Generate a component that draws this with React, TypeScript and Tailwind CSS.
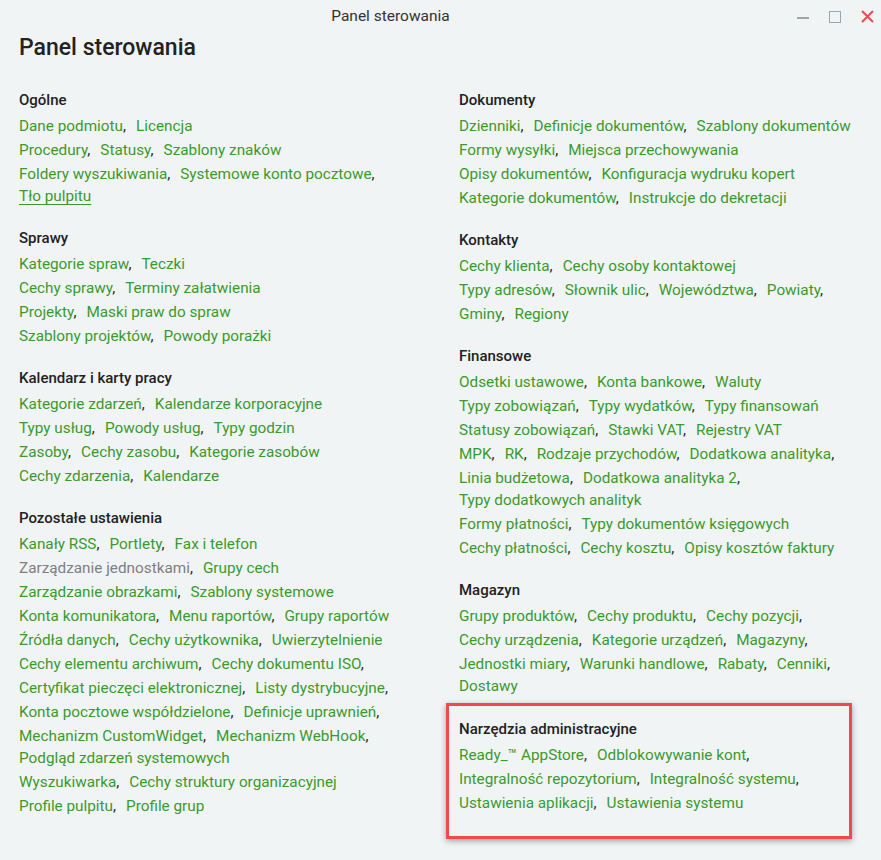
// A line is "Item|Item|Item" ; a trailing "," adds a comma after the last item.
// Lines starting with "~" continue the previous row (wrapped, no row gap).
interface Section {
  title: string;
  lines: string[];
  highlight?: boolean;
}

const MUTED = ["Zarządzanie jednostkami"];
const UNDERLINED = ["Tło pulpitu"];

const left: Section[] = [
  {
    title: "Ogólne",
    lines: [
      "Dane podmiotu|Licencja",
      "Procedury|Statusy|Szablony znaków",
      "Foldery wyszukiwania|Systemowe konto pocztowe,",
      "~Tło pulpitu",
    ],
  },
  {
    title: "Sprawy",
    lines: [
      "Kategorie spraw|Teczki",
      "Cechy sprawy|Terminy załatwienia",
      "Projekty|Maski praw do spraw",
      "Szablony projektów|Powody porażki",
    ],
  },
  {
    title: "Kalendarz i karty pracy",
    lines: [
      "Kategorie zdarzeń|Kalendarze korporacyjne",
      "Typy usług|Powody usług|Typy godzin",
      "Zasoby|Cechy zasobu|Kategorie zasobów",
      "Cechy zdarzenia|Kalendarze",
    ],
  },
  {
    title: "Pozostałe ustawienia",
    lines: [
      "Kanały RSS|Portlety|Fax i telefon",
      "Zarządzanie jednostkami|Grupy cech",
      "Zarządzanie obrazkami|Szablony systemowe",
      "Konta komunikatora|Menu raportów|Grupy raportów",
      "Źródła danych|Cechy użytkownika|Uwierzytelnienie",
      "Cechy elementu archiwum|Cechy dokumentu ISO,",
      "Certyfikat pieczęci elektronicznej|Listy dystrybucyjne,",
      "Konta pocztowe współdzielone|Definicje uprawnień,",
      "Mechanizm CustomWidget|Mechanizm WebHook,",
      "~Podgląd zdarzeń systemowych",
      "Wyszukiwarka|Cechy struktury organizacyjnej",
      "Profile pulpitu|Profile grup",
    ],
  },
];

const right: Section[] = [
  {
    title: "Dokumenty",
    lines: [
      "Dzienniki|Definicje dokumentów|Szablony dokumentów",
      "Formy wysyłki|Miejsca przechowywania",
      "Opisy dokumentów|Konfiguracja wydruku kopert",
      "Kategorie dokumentów|Instrukcje do dekretacji",
    ],
  },
  {
    title: "Kontakty",
    lines: [
      "Cechy klienta|Cechy osoby kontaktowej",
      "Typy adresów|Słownik ulic|Województwa|Powiaty,",
      "Gminy|Regiony",
    ],
  },
  {
    title: "Finansowe",
    lines: [
      "Odsetki ustawowe|Konta bankowe|Waluty",
      "Typy zobowiązań|Typy wydatków|Typy finansowań",
      "Statusy zobowiązań|Stawki VAT|Rejestry VAT",
      "MPK|RK|Rodzaje przychodów|Dodatkowa analityka,",
      "Linia budżetowa|Dodatkowa analityka 2,",
      "~Typy dodatkowych analityk",
      "Formy płatności|Typy dokumentów księgowych",
      "Cechy płatności|Cechy kosztu|Opisy kosztów faktury",
    ],
  },
  {
    title: "Magazyn",
    lines: [
      "Grupy produktów|Cechy produktu|Cechy pozycji,",
      "Cechy urządzenia|Kategorie urządzeń|Magazyny,",
      "Jednostki miary|Warunki handlowe|Rabaty|Cenniki,",
      "~Dostawy",
    ],
  },
  {
    title: "Narzędzia administracyjne",
    highlight: true,
    lines: [
      "Ready_™ AppStore|Odblokowywanie kont,",
      "Integralność repozytorium|Integralność systemu,",
      "Ustawienia aplikacji|Ustawienia systemu",
    ],
  },
];

function Line({ line }: { line: string }) {
  const wrapped = line.startsWith("~");
  let body = wrapped ? line.slice(1) : line;
  const trailing = body.endsWith(",");
  if (trailing) body = body.slice(0, -1);
  const items = body.split("|");

  return (
    <div className={wrapped ? "leading-[22px]" : "mt-[2px] leading-[22px]"}>
      {items.map((text, i) => {
        const comma = i < items.length - 1 || trailing;
        return (
          <span key={i}>
            <a
              href="#"
              className={
                MUTED.includes(text)
                  ? "text-[#7f7f7f]"
                  : UNDERLINED.includes(text)
                  ? "text-[#3b9a2d] underline underline-offset-[3px]"
                  : "text-[#3b9a2d]"
              }
            >
              {text}
            </a>
            {comma && <span className="text-[#2a2a2a]">,</span>}
            {i < items.length - 1 && <span className="inline-block w-[10px]" />}
          </span>
        );
      })}
    </div>
  );
}

function Block({ section }: { section: Section }) {
  const content = (
    <>
      <div className="mb-[4px] text-[15px] font-medium leading-[22px] text-[#222]">{section.title}</div>
      {section.lines.map((l, i) => (
        <Line key={i} line={l} />
      ))}
    </>
  );
  if (section.highlight) {
    return (
      <div className="-ml-[13px] -mt-[14px] w-[406px] border-[3px] border-[#f04a4a] pb-[22px] pl-[10px] pr-[10px] pt-[12px] shadow-[0_2px_6px_rgba(0,0,0,0.35)]">
        {content}
      </div>
    );
  }
  return <div className="mb-[20px]">{content}</div>;
}

export default function App() {
  return (
    <div
      className="h-[860px] w-[881px] overflow-hidden bg-[#f1f4f5] text-[15.3px] text-[#222]"
      style={{ fontFamily: "Roboto, 'Noto Sans', sans-serif" }}
    >
      <div className="flex h-[33px] items-center">
        <div className="flex-1 text-center text-[15.5px] text-[#333]">Panel sterowania</div>
        <div className="flex w-[100px] items-center gap-[20px] pl-[16px]">
          <svg width="12" height="12" viewBox="0 0 12 12">
            <line x1="0" y1="7" x2="12" y2="7" stroke="#9aa6ab" strokeWidth="2" />
          </svg>
          <svg width="12" height="12" viewBox="0 0 12 12">
            <rect x="0.5" y="0.5" width="11" height="11" fill="none" stroke="#9aa6ab" strokeWidth="1" />
          </svg>
          <svg width="13" height="13" viewBox="0 0 13 13">
            <path d="M1 1L12 12M12 1L1 12" stroke="#f04a4a" strokeWidth="2" />
          </svg>
        </div>
      </div>
      <h1 className="px-[19px] pt-[1px] text-[23px] font-medium leading-[28px] text-[#222]">Panel sterowania</h1>
      <div className="mt-[27px] grid grid-cols-[440px_1fr] px-[19px]">
        <div>
          {left.map((s) => (
            <Block key={s.title} section={s} />
          ))}
        </div>
        <div>
          {right.map((s) => (
            <Block key={s.title} section={s} />
          ))}
        </div>
      </div>
    </div>
  );
}
